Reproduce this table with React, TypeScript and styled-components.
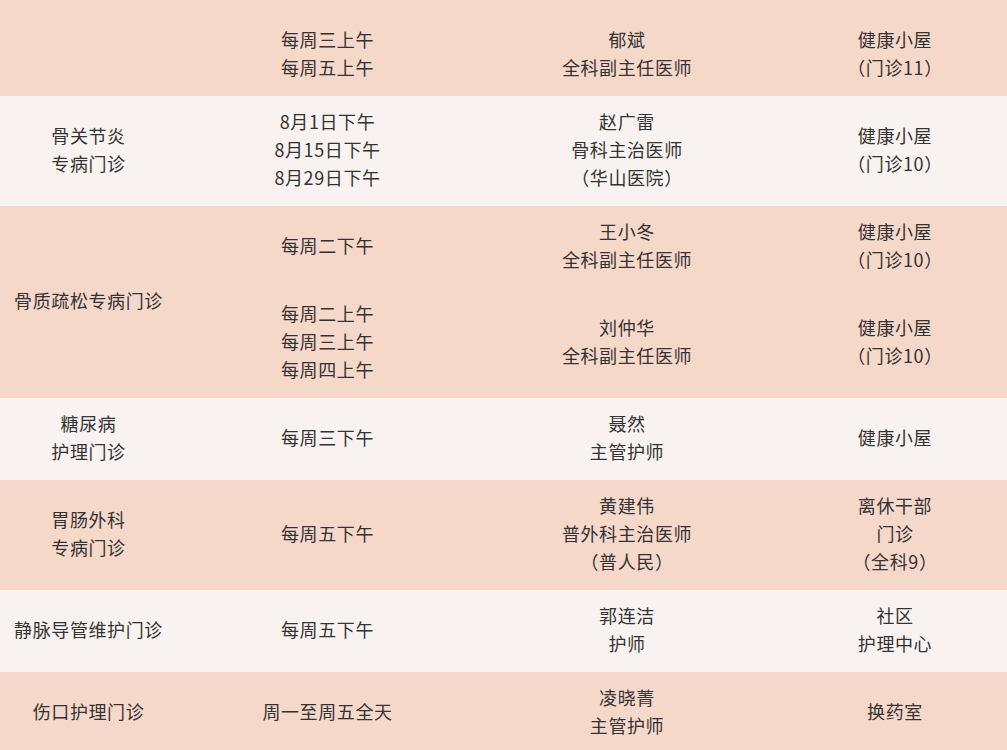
import React, { ReactElement } from 'react';
import styled, { createGlobalStyle } from 'styled-components';

const GlobalStyle = createGlobalStyle`
  html, body {
    margin: 0;
    padding: 0;
    background: #f8f3f0;
  }

  body {
    font-family: "Noto Sans CJK SC", "Noto Sans", sans-serif;
    color: #333333;
  }
`;

const Schedule = styled.div`
  width: 1007px;
  height: 750px;
  overflow: hidden;
  display: flex;
  flex-direction: column;
`;

const Row = styled.div<{ $tone: 'peach' | 'light'; $lead?: boolean }>`
  display: grid;
  grid-template-columns: 177px 301px 298px 1fr;
  flex-shrink: 0;
  background: ${(p) => (p.$tone === 'peach' ? '#f6d8ca' : '#f8f3f0')};

  & > div {
    padding-top: ${(p) => (p.$lead ? '25px' : '11px')};
  }
`;

const Cell = styled.div<{ $span?: number; $shift?: number }>`
  grid-row: ${(p) => (p.$span ? `span ${p.$span}` : 'auto')};
  display: flex;
  flex-direction: column;
  justify-content: center;
  align-items: center;
  padding: 11px 0 15px ${(p) => p.$shift || 0}px;
  font-size: 18px;
  line-height: 28px;
  letter-spacing: 0.6px;
  text-align: center;
  white-space: nowrap;
  font-feature-settings: "halt";
`;

const Line = styled.span`
  display: block;
`;

interface Slot {
  time: string[];
  doctor: string[];
  place: string[];
}

interface ClinicRow {
  clinic: string[];
  slots: Slot[];
  tone: 'peach' | 'light';
  lead?: boolean;
}

const rows: ClinicRow[] = [
  {
    clinic: [],
    tone: 'peach',
    lead: true,
    slots: [
      { time: ['每周三上午', '每周五上午'], doctor: ['郁斌', '全科副主任医师'], place: ['健康小屋', '（门诊11）'] },
    ],
  },
  {
    clinic: ['骨关节炎', '专病门诊'],
    tone: 'light',
    slots: [
      {
        time: ['8月1日下午', '8月15日下午', '8月29日下午'],
        doctor: ['赵广雷', '骨科主治医师', '（华山医院）'],
        place: ['健康小屋', '（门诊10）'],
      },
    ],
  },
  {
    clinic: ['骨质疏松专病门诊'],
    tone: 'peach',
    slots: [
      { time: ['每周二下午'], doctor: ['王小冬', '全科副主任医师'], place: ['健康小屋', '（门诊10）'] },
      {
        time: ['每周二上午', '每周三上午', '每周四上午'],
        doctor: ['刘仲华', '全科副主任医师'],
        place: ['健康小屋', '（门诊10）'],
      },
    ],
  },
  {
    clinic: ['糖尿病', '护理门诊'],
    tone: 'light',
    slots: [{ time: ['每周三下午'], doctor: ['聂然', '主管护师'], place: ['健康小屋'] }],
  },
  {
    clinic: ['胃肠外科', '专病门诊'],
    tone: 'peach',
    slots: [
      {
        time: ['每周五下午'],
        doctor: ['黄建伟', '普外科主治医师', '（普人民）'],
        place: ['离休干部', '门诊', '（全科9）'],
      },
    ],
  },
  {
    clinic: ['静脉导管维护门诊'],
    tone: 'light',
    slots: [{ time: ['每周五下午'], doctor: ['郭连洁', '护师'], place: ['社区', '护理中心'] }],
  },
  {
    clinic: ['伤口护理门诊'],
    tone: 'peach',
    slots: [{ time: ['周一至周五全天'], doctor: ['凌晓菁', '主管护师'], place: ['换药室'] }],
  },
];

const Lines = ({ items }: { items: string[] }): ReactElement => (
  <>
    {items.map((t, i) => (
      <Line key={i}>{t}</Line>
    ))}
  </>
);

const App = (): ReactElement => (
  <>
    <GlobalStyle />
    <Schedule>
      {rows.map((row, i) => (
        <Row key={i} $tone={row.tone} $lead={row.lead}>
          <Cell $span={row.slots.length}>
            <Lines items={row.clinic} />
          </Cell>
          {row.slots.map((slot, j) => (
            <React.Fragment key={j}>
              <Cell>
                <Lines items={slot.time} />
              </Cell>
              <Cell>
                <Lines items={slot.doctor} />
              </Cell>
              <Cell $shift={7}>
                <Lines items={slot.place} />
              </Cell>
            </React.Fragment>
          ))}
        </Row>
      ))}
    </Schedule>
  </>
);

export default App;
